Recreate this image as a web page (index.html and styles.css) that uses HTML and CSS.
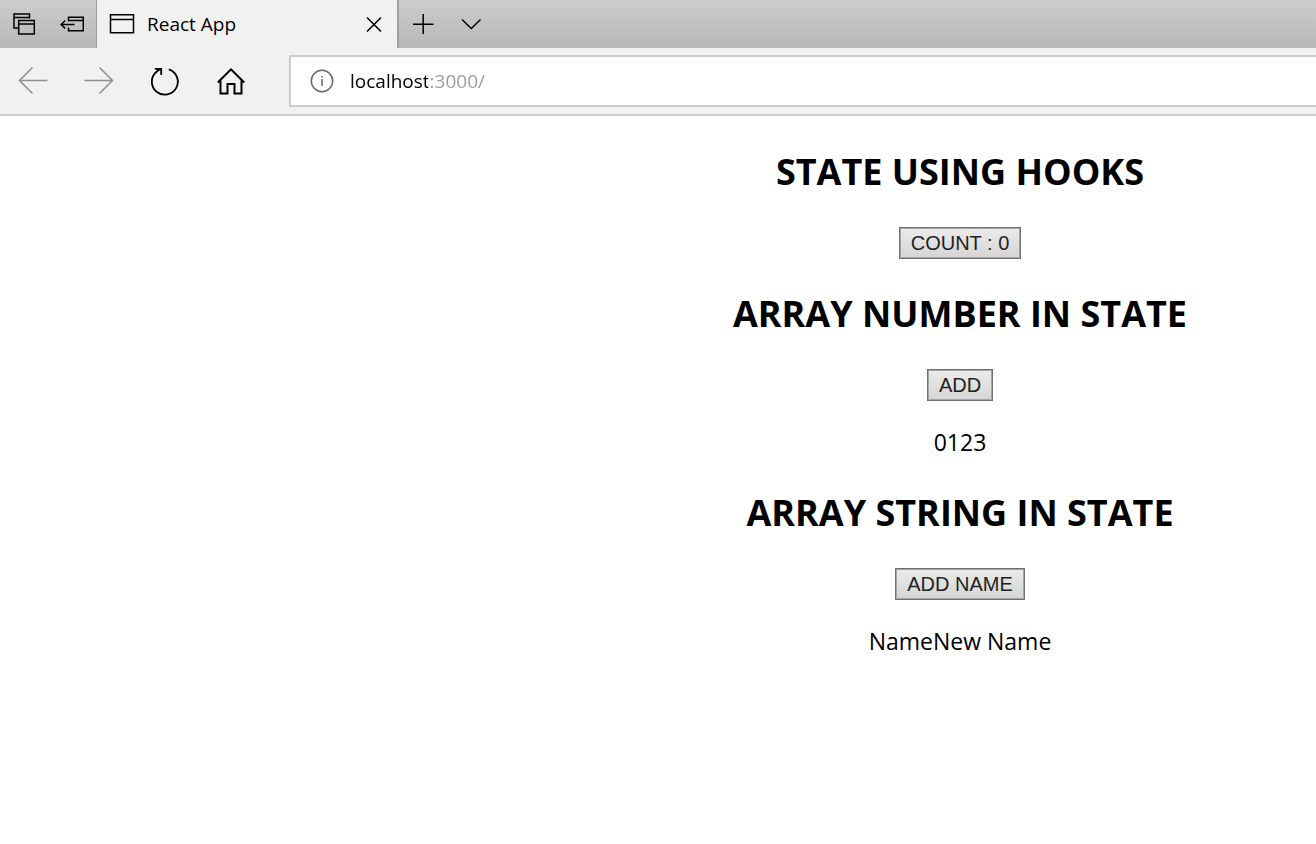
FILE: index.html
```html
<!DOCTYPE html>
<html lang="en">
<head>
<meta charset="utf-8">
<title>React App</title>
<link rel="stylesheet" href="styles.css">
</head>
<body>
<header class="browser">
  <div class="tabbar">
    <div class="tab-tools">
      <button class="tool" type="button" aria-label="Tabs you've set aside">
        <svg class="icon" width="24" height="24" viewBox="0 0 24 24"><path d="M6 16H2V2H17.500V6.500M2 5.500H17.500"/><path d="M6.700 8.500H22.300V22H6.700ZM6.700 12H22.300"/></svg>
      </button>
      <button class="tool" type="button" aria-label="Set these tabs aside">
        <svg class="icon" width="24" height="24" viewBox="0 0 24 24"><path d="M8.500 9.500V5.300H23.300V18.800H8.500V15.500M8.500 8.500H23.300M14.500 12.500H1M5.200 8.500L1.200 12.500L5.200 16.500"/></svg>
      </button>
    </div>
    <div class="tab">
      <svg class="icon" width="26" height="22" viewBox="0 0 26 22"><path d="M1.500 1.700H24.500V19.800H1.500ZM1.500 6.500H24.500"/></svg>
      <span class="tab-title">React App</span>
      <button class="close" type="button" aria-label="Close tab">
        <svg class="icon" width="16" height="16" viewBox="0 0 16 16"><path d="M1 1.500L15 15.500M15 1.500L1 15.500"/></svg>
      </button>
    </div>
    <button class="tool" type="button" aria-label="New tab">
      <svg class="icon" width="22" height="22" viewBox="0 0 22 22"><path d="M11.200 1V21M1 11.200H21.500"/></svg>
    </button>
    <button class="tool" type="button" aria-label="Show tab previews">
      <svg class="icon" width="22" height="22" viewBox="0 0 22 22"><path d="M2 6.500L11.300 15.500L20.500 6.500"/></svg>
    </button>
  </div>
  <div class="toolbar">
    <nav class="nav" aria-label="Browser">
      <button class="nav-button" type="button" aria-label="Back" disabled>
        <svg class="icon faded" width="32" height="32" viewBox="0 0 32 32"><path d="M30.500 15.500H2.500M15.500 2.500L2.500 15.500L15.500 28.500"/></svg>
      </button>
      <button class="nav-button" type="button" aria-label="Forward" disabled>
        <svg class="icon faded" width="32" height="32" viewBox="0 0 32 32"><path d="M1.500 15.500H29.500M16.500 2.500L29.500 15.500L16.500 28.500"/></svg>
      </button>
      <button class="nav-button" type="button" aria-label="Refresh">
        <svg class="icon refresh" width="32" height="32" viewBox="0 0 32 32"><path d="M19.800 4.300A13 13 0 1 1 7.500 6.700L11.500 3.800M5.800 3.800H12.200V10"/></svg>
      </button>
      <button class="nav-button" type="button" aria-label="Home">
        <svg class="icon home" width="32" height="32" viewBox="0 0 32 32"><path d="M2.800 17.500L16 4.300L29.200 17.500M5.500 15.500V28.500H12.500V19H19.500V28.500H26.500V15.500"/></svg>
      </button>
    </nav>
    <label class="address">
      <svg class="icon info" width="24" height="24" viewBox="0 0 24 24" role="img" aria-label="Site information"><circle cx="12" cy="12" r="10.700"/><path d="M12 10V17M12 7V8.600"/></svg>
      <input class="address-input" type="text" value="localhost:3000/" aria-label="Address" spellcheck="false">
    </label>
  </div>
</header>
<main class="page">
  <h2 class="heading">STATE USING HOOKS</h2>
  <button class="action" type="button">COUNT : 0</button>
  <h2 class="heading">ARRAY NUMBER IN STATE</h2>
  <button class="action" type="button">ADD</button>
  <p class="value">0123</p>
  <h2 class="heading">ARRAY STRING IN STATE</h2>
  <button class="action" type="button">ADD NAME</button>
  <p class="value">NameNew Name</p>
</main>
</body>
</html>
```
FILE: styles.css
```css
* { box-sizing: border-box; }

body {
  margin: 0;
  background: #fff;
  color: #000;
  font-family: "Segoe UI", "Open Sans", sans-serif;
}

button {
  padding: 0;
  border: 0;
  background: none;
  color: inherit;
  font: inherit;
}

.icon {
  display: block;
  flex: none;
  fill: none;
  stroke: #000;
  stroke-width: 1.5;
}

.faded { stroke: #8f8f8f; }
.refresh { stroke-width: 1.8; }
.home { stroke-width: 2; }
.info { stroke: #666; }

.browser {
  background: #f1f1f1;
  border-bottom: 2px solid #ccc;
}

.tabbar {
  display: flex;
  height: 48px;
  background: linear-gradient(#cdcdcd, #b7b7b7);
}

.tab-tools { display: flex; }

.tool {
  display: flex;
  width: 48px;
  align-items: center;
  justify-content: center;
}

.tab {
  display: flex;
  width: 303px;
  align-items: center;
  gap: 12px;
  padding: 0 15px 0 12px;
  border: solid #a0a0a0;
  border-width: 0 2px 0 1px;
  background: #f1f1f1;
}

.tab-title {
  flex: 1;
  font-size: 19px;
}

.toolbar {
  display: flex;
  align-items: center;
  gap: 25px;
  padding: 7px 0;
}

.nav { display: flex; }

.nav-button {
  display: flex;
  width: 66px;
  height: 50px;
  align-items: center;
  justify-content: center;
}

.address {
  display: flex;
  flex: 1;
  height: 52px;
  align-items: center;
  gap: 16px;
  padding-left: 19px;
  border: 2px solid #ccc;
  border-right: 0;
  background: #fff;
}

.address-input {
  flex: 1;
  min-width: 0;
  padding: 0;
  border: 0;
  background: linear-gradient(90deg, #000 78px, #999 78px) text;
  color: transparent;
  font: inherit;
  font-size: 19px;
}

.page {
  padding: 1px 0 32px 604px;
  text-align: center;
}

.heading {
  margin: 30px 0;
  font-size: 36px;
  line-height: 50px;
}

.action {
  display: block;
  height: 32px;
  margin: 0 auto;
  padding: 0 11px;
  border: 1px solid #707070;
  outline: 1px solid #a5a5a5;
  outline-offset: -2px;
  background: linear-gradient(#ebebeb, #d5d5d5);
  color: #222;
  font: 20px/28px "Liberation Sans", Arial, sans-serif;
}

.value {
  margin: 26px 0;
  font-size: 23px;
  line-height: 31px;
}
```
